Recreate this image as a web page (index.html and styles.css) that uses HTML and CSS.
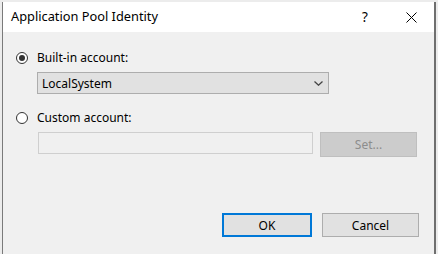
FILE: index.html
```html
<!DOCTYPE html>
<html>
<head>
<meta charset="utf-8">
<link rel="stylesheet" href="styles.css">
</head>
<body>
<div class="screen">
  <div class="window">
    <div class="titlebar">
      <span class="title">Application Pool Identity</span>
      <span class="cap-btn">?</span>
      <span class="cap-btn">
        <svg width="11" height="11" viewBox="0 0 11 11"><path d="M0.5 0.5 L10.5 10.5 M10.5 0.5 L0.5 10.5" stroke="#000" stroke-width="1" fill="none"/></svg>
      </span>
    </div>
    <div class="content">
      <label class="radio-row first">
        <span class="radio checked"></span>
        <span>Built-in account:</span>
      </label>
      <div class="select">
        <span>LocalSystem</span>
        <svg width="9" height="5" viewBox="0 0 9 5"><path d="M0.5 0.5 L4.5 4.2 L8.5 0.5" stroke="#444" stroke-width="1.3" fill="none"/></svg>
      </div>
      <label class="radio-row second">
        <span class="radio"></span>
        <span>Custom account:</span>
      </label>
      <div class="custom-row">
        <div class="textbox"></div>
        <div class="btn disabled">Set...</div>
      </div>
      <div class="footer">
        <div class="btn ok">OK</div>
        <div class="btn cancel">Cancel</div>
      </div>
    </div>
  </div>
</div>
</body>
</html>
```
FILE: styles.css
```css
html, body {
  margin: 0;
  padding: 0;
}
body {
  font-family: "Noto Sans", "Liberation Sans", sans-serif;
  font-size: 12px;
  color: #000;
  background: #ececec;
}
.screen {
  padding: 2px 0 0 2px;
  height: 254px;
  box-sizing: border-box;
}
.window {
  width: 434px;
  height: 252px;
  box-sizing: border-box;
  border-left: 1px solid #7a7a7a;
  border-right: 2px solid #6f6f6f;
  background: #f0f0f0;
  display: flex;
  flex-direction: column;
}
.titlebar {
  height: 30px;
  background: #fff;
  display: flex;
  align-items: center;
  padding-left: 8px;
  flex: none;
}
.title {
  flex: 1;
  line-height: 1;
  font-size: 12.8px;
  padding-bottom: 1px;
}
.cap-btn {
  width: 46px;
  height: 30px;
  display: flex;
  align-items: center;
  justify-content: center;
  font-size: 13.5px;
}
.content {
  padding: 17px 0 0 0;
  display: flex;
  flex-direction: column;
}
.radio-row {
  display: flex;
  align-items: center;
  height: 17px;
  padding-left: 13px;
  gap: 9px;
}
.radio-row.second {
  margin-top: 15px;
}
.radio {
  width: 12px;
  height: 12px;
  box-sizing: border-box;
  border: 1px solid #333;
  border-radius: 50%;
  display: flex;
  align-items: center;
  justify-content: center;
  background: #fff;
}
.radio.checked::after {
  content: "";
  width: 6px;
  height: 6px;
  border-radius: 50%;
  background: #333;
}
.select {
  margin: 6px 0 0 34px;
  width: 292px;
  height: 22px;
  box-sizing: border-box;
  border: 1px solid #adadad;
  background: #e1e1e1;
  display: flex;
  align-items: center;
  justify-content: space-between;
  padding: 0 5px 0 4px;
}
.custom-row {
  display: flex;
  align-items: flex-start;
  margin: 6px 0 0 35px;
  gap: 7px;
}
.textbox {
  width: 275px;
  height: 22px;
  box-sizing: border-box;
  border: 1px solid #cfcfcf;
  background: #f0f0f0;
}
.btn {
  height: 25px;
  box-sizing: border-box;
  display: flex;
  align-items: center;
  justify-content: center;
  background: #e1e1e1;
  border: 1px solid #adadad;
}
.btn.disabled {
  width: 97px;
  background: #cccccc;
  border-color: #bfbfbf;
  color: #8d8d8d;
}
.footer {
  display: flex;
  justify-content: flex-end;
  gap: 10px;
  margin-top: 56px;
  padding-right: 15px;
}
.btn.ok {
  width: 90px;
  height: 24px;
  border: 2px solid #0078d7;
}
.btn.cancel {
  width: 97px;
  height: 24px;
}
```
